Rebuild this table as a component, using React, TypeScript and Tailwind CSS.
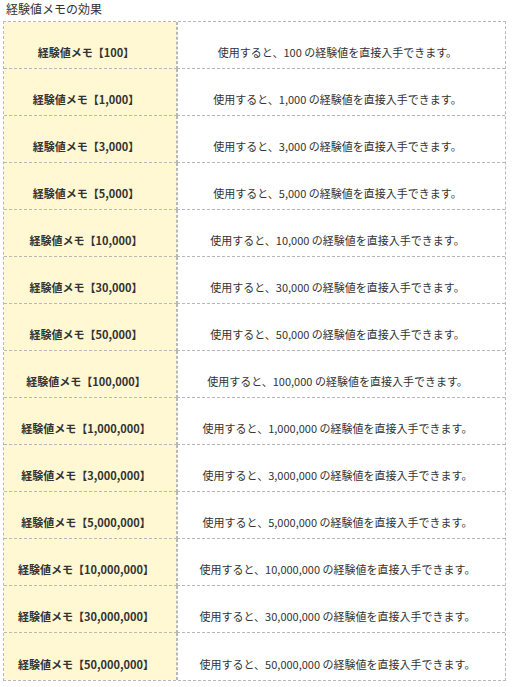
import React from "react";

const rows = [
  "100",
  "1,000",
  "3,000",
  "5,000",
  "10,000",
  "30,000",
  "50,000",
  "100,000",
  "1,000,000",
  "3,000,000",
  "5,000,000",
  "10,000,000",
  "30,000,000",
  "50,000,000",
];

export default function App() {
  return (
    <div
      className="w-[512px] h-[687px] bg-white text-[#333] overflow-hidden"
      style={{ fontFamily: '"Noto Sans CJK JP", "Noto Sans", sans-serif' }}
    >
      <div className="pl-[6px] pt-[1px] h-[21px] text-[12px] leading-[16px] text-[#333]">
        経験値メモの効果
      </div>
      <table className="ml-[3px] w-[503px] border-separate border-spacing-0 border border-dashed border-[#b8b8b8]">
        <tbody>
          {rows.map((v, i) => (
            <tr key={v}>
              <td
                className={`w-[173px] h-[47px] bg-[#fff8d2] border-r border-dashed border-[#b8b8b8] ${
                  i < rows.length - 1 ? "border-b" : ""
                } pt-[14px] pr-[8px] text-center align-middle text-[11px] font-bold leading-[14px] text-[#333]`}
              >
                経験値メモ【{v}】
              </td>
              <td
                className={`h-[47px] bg-white border-l border-dashed border-[#b8b8b8] ${
                  i < rows.length - 1 ? "border-b" : ""
                } pt-[14px] pr-[8px] text-center align-middle text-[11px] leading-[14px] text-[#333]`}
              >
                使用すると、{v} の経験値を直接入手できます。
              </td>
            </tr>
          ))}
        </tbody>
      </table>
    </div>
  );
}
